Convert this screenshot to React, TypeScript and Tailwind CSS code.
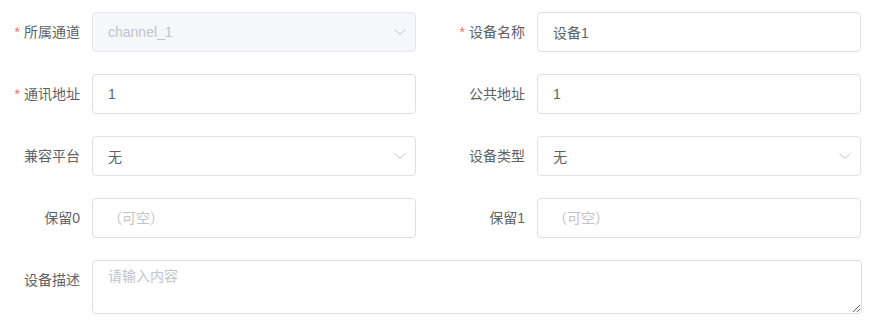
const Arrow = () => (
  <svg width="14" height="14" viewBox="0 0 14 14" className="absolute right-[9px] top-[13px]">
    <path d="M1.5 4.5 L7 9.5 L12.5 4.5" fill="none" stroke="#c0c4cc" strokeWidth="1" />
  </svg>
);

const Label = ({ text, required }: { text: string; required?: boolean }) => (
  <label className="w-[92px] shrink-0 pr-3 text-right text-sm leading-10 text-[#606266]">
    {required && <span className="mr-1 text-[#f56c6c]">*</span>}
    {text}
  </label>
);

const Input = ({
  value,
  placeholder,
  select,
  disabled,
}: {
  value?: string;
  placeholder?: string;
  select?: boolean;
  disabled?: boolean;
}) => (
  <div className="relative w-[324px]">
    <input
      readOnly
      value={value ?? ""}
      placeholder={placeholder}
      disabled={disabled}
      className={
        "h-10 w-full rounded border px-[15px] text-sm outline-none placeholder:text-[#c0c4cc] " +
        (disabled
          ? "border-[#e4e7ed] bg-[#f5f7fa] text-[#c0c4cc]"
          : "border-[#dcdfe6] bg-white text-[#606266]")
      }
    />
    {select && <Arrow />}
  </div>
);

const Item = ({ children }: { children: React.ReactNode }) => (
  <div className="mb-[22px] flex w-[416px]">{children}</div>
);

export default function App() {
  return (
    <div
      className="bg-white pt-3"
      style={{ fontFamily: '"Liberation Sans", "Noto Sans CJK SC", sans-serif' }}
    >
      <div className="grid grid-cols-[416px_416px] gap-x-[29px]">
        <Item>
          <Label text="所属通道" required />
          <Input value="channel_1" select disabled />
        </Item>
        <Item>
          <Label text="设备名称" required />
          <Input value="设备1" />
        </Item>
        <Item>
          <Label text="通讯地址" required />
          <Input value="1" />
        </Item>
        <Item>
          <Label text="公共地址" />
          <Input value="1" />
        </Item>
        <Item>
          <Label text="兼容平台" />
          <Input value="无" select />
        </Item>
        <Item>
          <Label text="设备类型" />
          <Input value="无" select />
        </Item>
        <Item>
          <Label text="保留0" />
          <Input placeholder="（可空）" />
        </Item>
        <Item>
          <Label text="保留1" />
          <Input placeholder="（可空）" />
        </Item>
      </div>
      <div className="flex">
        <Label text="设备描述" />
        <textarea
          placeholder="请输入内容"
          className="h-[54px] w-[770px] rounded border border-[#dcdfe6] px-[15px] py-[5px] text-sm leading-[1.5] text-[#606266] outline-none placeholder:text-[#c0c4cc]"
        />
      </div>
    </div>
  );
}
